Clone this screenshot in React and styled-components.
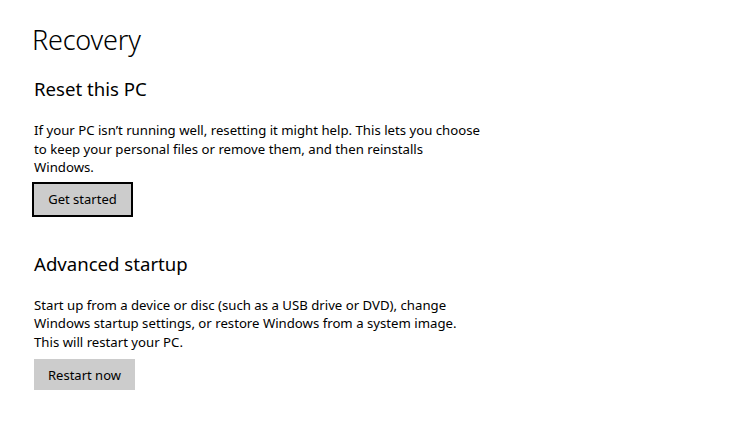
import React from "react";
import styled, { createGlobalStyle } from "styled-components";

const GlobalStyle = createGlobalStyle`
  html, body {
    margin: 0;
    padding: 0;
    background: #ffffff;
  }
  body {
    font-family: "Noto Sans", "Open Sans", sans-serif;
    color: #000000;
  }
`;

const sections = [
  {
    title: "Reset this PC",
    text:
      "If your PC isn\u2019t running well, resetting it might help. This lets you choose\nto keep your personal files or remove them, and then reinstalls\nWindows.",
    action: "Get started",
    focused: true,
  },
  {
    title: "Advanced startup",
    text:
      "Start up from a device or disc (such as a USB drive or DVD), change\nWindows startup settings, or restore Windows from a system image.\nThis will restart your PC.",
    action: "Restart now",
    focused: false,
  },
];

const App = () => {
  return (
    <Page>
      <GlobalStyle />
      <PageTitle>Recovery</PageTitle>
      {sections.map((s) => (
        <Section key={s.title}>
          <SectionTitle>{s.title}</SectionTitle>
          <Description>{s.text}</Description>
          <ActionButton $focused={s.focused}>{s.action}</ActionButton>
        </Section>
      ))}
    </Page>
  );
};

const Page = styled.div`
  display: flex;
  flex-direction: column;
  align-items: flex-start;
  width: 744px;
  height: 434px;
  box-sizing: border-box;
  padding: 21px 0 0 34px;
  overflow: hidden;
`;

const PageTitle = styled.h1`
  margin: 0 0 0 -2px;
  font-size: 27px;
  font-weight: 300;
  line-height: 38px;
  letter-spacing: -0.2px;
`;

const Section = styled.section`
  display: flex;
  flex-direction: column;
  align-items: flex-start;
  margin-top: 15px;

  & + & {
    margin-top: 32px;
  }
`;

const SectionTitle = styled.h2`
  margin: 0 0 17px 0;
  font-size: 18.6px;
  font-weight: 400;
  line-height: 30px;
`;

const Description = styled.p`
  margin: 0;
  max-width: 470px;
  white-space: pre-line;
  font-size: 13.2px;
  line-height: 18.5px;
`;

const ActionButton = styled.button`
  box-sizing: border-box;
  width: 101px;
  height: ${(p) => (p.$focused ? "35px" : "31px")};
  margin-left: ${(p) => (p.$focused ? "-2px" : "0")};
  margin-top: ${(p) => (p.$focused ? "5px" : "8px")};
  padding: 0;
  background: #cccccc;
  border: ${(p) => (p.$focused ? "2px solid #000000" : "none")};
  border-radius: 0;
  font-family: "Noto Sans", "Open Sans", sans-serif;
  font-size: 13px;
  color: #000000;
  cursor: pointer;
`;

export default App;
